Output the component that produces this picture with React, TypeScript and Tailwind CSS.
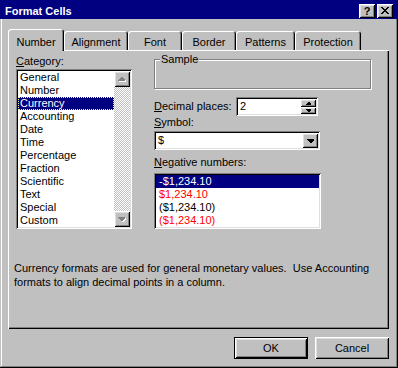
import React from "react";

const raised =
  "shadow-[inset_1px_1px_#fff,inset_-1px_-1px_#000,inset_2px_2px_#dfdfdf,inset_-2px_-2px_#808080]";
const sunken =
  "shadow-[inset_1px_1px_#808080,inset_-1px_-1px_#fff,inset_2px_2px_#000,inset_-2px_-2px_#dfdfdf]";

const categories = [
  "General",
  "Number",
  "Currency",
  "Accounting",
  "Date",
  "Time",
  "Percentage",
  "Fraction",
  "Scientific",
  "Text",
  "Special",
  "Custom",
];

const tabs = [
  { label: "Alignment", w: "w-[64px]" },
  { label: "Font", w: "w-[54px]" },
  { label: "Border", w: "w-[54px]" },
  { label: "Patterns", w: "w-[59px]" },
  { label: "Protection", w: "w-[66px]" },
];

function UpArrowDisabled() {
  return (
    <svg width="8" height="5" viewBox="0 0 8 5" shapeRendering="crispEdges">
      <path d="M4 1h1l3 3v1H1V4z" fill="#fff" />
      <path d="M3 0h1l3 3v1H0V3z" fill="#808080" />
    </svg>
  );
}

function DownArrowDisabled() {
  return (
    <svg width="8" height="5" viewBox="0 0 8 5" shapeRendering="crispEdges">
      <path d="M1 1h7v1L5 5H4L1 2z" fill="#fff" />
      <path d="M0 0h7v1L4 4H3L0 1z" fill="#808080" />
    </svg>
  );
}

export default function App() {
  return (
    <div className="w-[398px] h-[368px] bg-[#c0c0c0] font-['Liberation_Sans',Arial,sans-serif] text-[11px] leading-[13px] text-black flex flex-col shadow-[inset_-1px_-1px_#000,inset_1px_0_#c0c0c0,inset_-2px_-2px_#808080,inset_2px_0_#fff]">
      {/* Title bar */}
      <div className="h-[19px] bg-[#000080] flex items-start">
        <div className="pl-[5px] pt-[5px] text-white font-bold">Format Cells</div>
        <div className="ml-auto mt-[4px] mr-[5px] flex gap-[2px]">
          <div className={`w-[16px] h-[14px] bg-[#c0c0c0] ${raised} flex items-center justify-center font-bold text-[11px] leading-[14px] pb-px`}>
            ?
          </div>
          <div className={`w-[16px] h-[14px] bg-[#c0c0c0] ${raised} flex items-center justify-center pb-px`}>
            <svg width="8" height="7" viewBox="0 0 8 7" shapeRendering="crispEdges">
              <path d="M0 0h2l2 2.5L6 0h2L5 3.5 8 7H6L4 4.5 2 7H0l3-3.5z" fill="#000" />
            </svg>
          </div>
        </div>
      </div>

      {/* Tabs */}
      <div className="mt-[10px] ml-[8px] h-[22px] flex items-end relative z-10 -mb-px">
        <div className="w-[56px] h-[22px] bg-[#c0c0c0] rounded-t-[3px] shadow-[inset_1px_1px_#fff,inset_-1px_0_#000,inset_-2px_0_#808080] pt-[7px] text-center">
          Number
        </div>
        {tabs.map((t) => (
          <div
            key={t.label}
            className={`${t.w} h-[19px] mb-px bg-[#c0c0c0] rounded-t-[3px] shadow-[inset_1px_1px_#fff,inset_-1px_0_#000,inset_-2px_0_#808080] pt-[5px] text-center`}
          >
            {t.label}
          </div>
        ))}
      </div>

      {/* Tab page */}
      <div className="ml-[8px] w-[381px] h-[279px] flex flex-col shadow-[inset_1px_1px_#fff,inset_-1px_-1px_#000,inset_-2px_-2px_#808080]">
        <div className="flex pt-[5px] pl-[8px] gap-[22px]">
          {/* Category */}
          <div className="w-[116px] flex flex-col">
            <div>
              <span className="underline">C</span>ategory:
            </div>
            <div className={`mt-px h-[160px] bg-white ${sunken} p-[2px] flex`}>
              <div className="flex-1 flex flex-col">
                {categories.map((c) =>
                  c === "Currency" ? (
                    <div
                      key={c}
                      className="h-[13px] leading-[11px] pl-px bg-[#000080] text-white border border-dotted border-[#ffff7f]"
                    >
                      {c}
                    </div>
                  ) : (
                    <div key={c} className="h-[13px] pl-[2px]">
                      {c}
                    </div>
                  )
                )}
              </div>
              <div className="w-[16px] flex flex-col">
                <div className={`h-[16px] bg-[#c0c0c0] ${raised} flex items-center justify-center`}>
                  <UpArrowDisabled />
                </div>
                <div className="flex-1 bg-[repeating-conic-gradient(#fff_0%_25%,#c0c0c0_0%_50%)] bg-[length:2px_2px]" />
                <div className={`h-[16px] bg-[#c0c0c0] ${raised} flex items-center justify-center`}>
                  <DownArrowDisabled />
                </div>
              </div>
            </div>
          </div>

          {/* Right column */}
          <div className="w-[217px] flex flex-col">
            <div className="mt-[4px] w-[217px] h-[30px] relative border border-[#808080] shadow-[1px_1px_#fff,inset_1px_1px_#fff]">
              <span className="absolute -top-[7px] left-[5px] px-px bg-[#c0c0c0]">Sample</span>
            </div>

            <div className="mt-[8px] h-[19px] flex items-center">
              <div className="w-[82px]">
                <span className="underline">D</span>ecimal places:
              </div>
              <div className={`w-[82px] h-[19px] bg-white ${sunken} p-[2px] flex`}>
                <div className="flex-1 pl-[2px] leading-[15px]">2</div>
                <div className="w-[16px] flex flex-col">
                  <div className={`h-[8px] bg-[#c0c0c0] ${raised} flex items-center justify-center`}>
                    <svg width="5" height="3" viewBox="0 0 5 3" shapeRendering="crispEdges">
                      <path d="M2 0h1l2 2v1H0V2z" fill="#000" />
                    </svg>
                  </div>
                  <div className={`h-[7px] bg-[#c0c0c0] ${raised} flex items-center justify-center`}>
                    <svg width="5" height="3" viewBox="0 0 5 3" shapeRendering="crispEdges">
                      <path d="M0 0h5v1L3 3H2L0 1z" fill="#000" />
                    </svg>
                  </div>
                </div>
              </div>
            </div>

            <div>
              <span className="underline">S</span>ymbol:
            </div>
            <div className={`mt-[2px] w-[166px] h-[19px] bg-white ${sunken} p-[2px] flex`}>
              <div className="flex-1 pl-[2px] leading-[15px]">$</div>
              <div className={`w-[16px] bg-[#c0c0c0] ${raised} flex items-center justify-center`}>
                <svg width="7" height="4" viewBox="0 0 7 4" shapeRendering="crispEdges">
                  <path d="M0 0h7v1L4 4H3L0 1z" fill="#000" />
                </svg>
              </div>
            </div>

            <div className="mt-[6px]">
              <span className="underline">N</span>egative numbers:
            </div>
            <div className={`mt-[4px] w-[167px] h-[56px] bg-white ${sunken} p-[2px] flex flex-col`}>
              <div className="h-[13px] pl-[3px] bg-[#000080] text-white">-$1,234.10</div>
              <div className="h-[13px] pl-[3px] text-[#ff0000]">$1,234.10</div>
              <div className="h-[13px] pl-[3px]">($1,234.10)</div>
              <div className="h-[13px] pl-[3px] text-[#ff0000]">($1,234.10)</div>
            </div>
          </div>
        </div>

        <div className="mt-[32px] pl-[6px] leading-[14px] whitespace-pre">
          {"Currency formats are used for general monetary values.  Use Accounting\nformats to align decimal points in a column."}
        </div>
      </div>

      {/* Buttons */}
      <div className="mt-[8px] pr-[9px] flex justify-end gap-[7px]">
        <div className="w-[74px] h-[22px] border border-black">
          <div className={`w-full h-full ${raised} flex items-center justify-center`}>OK</div>
        </div>
        <div className={`w-[74px] h-[22px] ${raised} flex items-center justify-center`}>Cancel</div>
      </div>
    </div>
  );
}
